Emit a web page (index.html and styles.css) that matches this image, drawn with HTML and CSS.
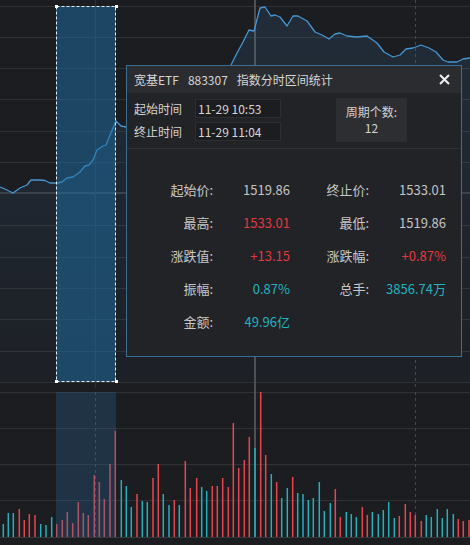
FILE: index.html
```html
<!DOCTYPE html>
<html lang="zh">
<head>
<meta charset="utf-8">
<title>指数分时区间统计</title>
<link rel="stylesheet" href="styles.css">
</head>
<body>
<div class="screen">
  <svg class="price-panel" width="470" height="388" viewBox="0 0 470 388">
    <defs>
      <linearGradient id="area" x1="0" y1="0" x2="0" y2="1">
        <stop offset="0" stop-color="#3d7fb8" stop-opacity="0.16"/>
        <stop offset="1" stop-color="#3d7fb8" stop-opacity="0.03"/>
      </linearGradient>
    </defs>
    <g class="grid">
      <path d="M0 6.5H470M0 37.5H470M0 68.5H470M0 99.5H470M0 131.5H470M0 162.5H470M0 225.5H470M0 257.5H470M0 288.5H470M0 319.5H470M0 351.5H470M0 382.5H470"/>
      <path class="mid" d="M0 193H470"/>
      <path d="M95.5 0V388"/>
      <path class="axis" d="M255 0V388"/>
      <path class="dash" d="M415.5 0V388"/>
    </g>
    <path class="area" d="M0 187 L5 189 L13 193 L20 188 L27 185 L31 180 L40 180 L45 180.5 L50 183 L58 183 L62 182 L67 178 L73 177 L80 172 L85 166 L89 165 L93 160 L97 150 L103 146 L106 145 L110 135 L116 121 L121 126 L126 127 L150 124 L180 110 L205 92 L225 75 L231 65 L237 53 L243 42 L249 30 L254 31 L260 8 L265 7 L271 16 L275 15 L280 17 L287 26 L293 16 L298 16 L307 21 L315 32 L322 35 L329 39 L335 34 L340 33 L347 36 L357 37 L367 36 L377 43 L384 52 L393 57 L400 55 L406 49 L413 48 L421 45 L429 48 L436 52 L443 60 L448 62 L457 62 L463 59 L470 58 L470 382 L0 382 Z"/>
    <path class="price" d="M0 187 L5 189 L13 193 L20 188 L27 185 L31 180 L40 180 L45 180.5 L50 183 L58 183 L62 182 L67 178 L73 177 L80 172 L85 166 L89 165 L93 160 L97 150 L103 146 L106 145 L110 135 L116 121 L121 126 L126 127 L150 124 L180 110 L205 92 L225 75 L231 65 L237 53 L243 42 L249 30 L254 31 L260 8 L265 7 L271 16 L275 15 L280 17 L287 26 L293 16 L298 16 L307 21 L315 32 L322 35 L329 39 L335 34 L340 33 L347 36 L357 37 L367 36 L377 43 L384 52 L393 57 L400 55 L406 49 L413 48 L421 45 L429 48 L436 52 L443 60 L448 62 L457 62 L463 59 L470 58"/>
    <rect class="sel" x="56" y="6" width="60" height="376"/>
    <rect class="sel-border" x="56.5" y="6.5" width="59" height="375"/>
    <g class="handle">
      <rect x="55" y="5" width="3" height="3"/>
      <rect x="115" y="5" width="3" height="3"/>
      <rect x="55" y="380" width="3" height="3"/>
      <rect x="115" y="380" width="3" height="3"/>
    </g>
  </svg>
  <svg class="vol-panel" width="470" height="157" viewBox="0 388 470 157">
    <g class="grid">
      <path d="M0 392.5H470M0 428.5H470M0 464.5H470M0 500.5H470"/>
      <path class="base" d="M0 537.5H470"/>
      <path class="dash" d="M95.5 392V537M415.5 392V537"/>
      <path class="axis" d="M255 388V537"/>
    </g>
    <path class="bar-up" d="M19.3 537V509M24.3 537V520M29.3 537V514M35 537V515M56.7 537V524M62.3 537V520M67.3 537V512M72.7 537V523M78.3 537V502M83.3 537V513M88.3 537V515M94.3 537V475M99.3 537V482M104.3 537V499M110 537V464M115.3 537V431M137 537V494M153 537V478M158.3 537V464M174.3 537V500M185.3 537V461M190.3 537V488M196.7 537V478M212.3 537V486M217.3 537V486M222.7 537V478M228.3 537V487M233.3 537V423M238.7 537V468M244.3 537V460M249.3 537V437M260.7 537V392M265.7 537V455M276.7 537V482M292.7 537V477M335.3 537V489M340.3 537V517M362.3 537V507M367.3 537V515M399.3 537V516M405.3 537V504M410.3 537V512M415.3 537V515M421.3 537V521M458.3 537V519M463.3 537V521M469 537V520"/>
    <path class="bar-down" d="M3.3 537V524M8.3 537V513M13.3 537V513M40.7 537V524M46 537V525M51.7 537V517M121.3 537V480M126.3 537V486M131.3 537V507M142.3 537V501M147.3 537V502M163.3 537V494M169 537V505M179.3 537V505M201.7 537V487M206.7 537V491M255 537V448M271.3 537V474M281.7 537V498M287.3 537V488M297.7 537V493M303 537V494M308.3 537V500M313.3 537V498M319.3 537V482M324.3 537V511M330.3 537V503M346.3 537V512M351.3 537V514M356.3 537V517M372.3 537V512M378.3 537V514M383.3 537V510M388.7 537V502M394.3 537V518M426.3 537V515M431.3 537V517M437.3 537V509M442.3 537V518M447.3 537V509M453.3 537V514"/>
    <rect class="sel-vol" x="56" y="392" width="60" height="145"/>
  </svg>

  <div class="dialog">
    <div class="title">
      <span class="t-seg">宽基ETF</span>
      <span class="t-seg">883307</span>
      <span class="t-seg">指数分时区间统计</span>
      <svg class="close" width="11" height="11" viewBox="0 0 11 11"><path d="M1 1L10 10M10 1L1 10"/></svg>
    </div>
    <div class="range">
      <div class="times">
        <div class="time-row"><span class="time-label">起始时间</span><span class="time-box">11-29 10:53</span></div>
        <div class="time-row"><span class="time-label">终止时间</span><span class="time-box">11-29 11:04</span></div>
      </div>
      <div class="period">
        <span>周期个数:</span>
        <span>12</span>
      </div>
    </div>
    <div class="stats">
      <span class="lbl">起始价:</span><span class="val">1519.86</span>
      <span class="lbl">终止价:</span><span class="val">1533.01</span>
      <span class="lbl">最高:</span><span class="val up">1533.01</span>
      <span class="lbl">最低:</span><span class="val">1519.86</span>
      <span class="lbl">涨跌值:</span><span class="val up">+13.15</span>
      <span class="lbl">涨跌幅:</span><span class="val up">+0.87%</span>
      <span class="lbl">振幅:</span><span class="val cy">0.87%</span>
      <span class="lbl">总手:</span><span class="val cy">3856.74万</span>
      <span class="lbl">金额:</span><span class="val cy">49.96亿</span>
    </div>
  </div>
</div>
</body>
</html>
```
FILE: styles.css
```css
html, body {
  margin: 0;
  padding: 0;
  background: #1c1d21;
}

.screen {
  position: relative;
  width: 470px;
  height: 545px;
  overflow: hidden;
  background: #1c1d21;
  font-family: "Noto Sans CJK SC", "Noto Sans", sans-serif;
}

.price-panel,
.vol-panel {
  display: block;
}

.grid path {
  fill: none;
  stroke: #2f3135;
  stroke-width: 1;
}

.grid .mid {
  stroke: #393b3f;
  stroke-width: 2;
}

.grid .axis {
  stroke: #4e5054;
  stroke-width: 2;
}

.grid .dash {
  stroke: #45474b;
  stroke-dasharray: 3 3;
}

.grid .base {
  stroke: #36383c;
}

.area {
  fill: url(#area);
  stroke: none;
}

.price {
  fill: none;
  stroke: #4596d2;
  stroke-width: 1.3;
  stroke-linejoin: round;
}

.sel {
  fill: rgba(30, 112, 168, 0.5);
}

.sel-border {
  fill: none;
  stroke: #e6eef5;
  stroke-width: 1;
  stroke-dasharray: 3 2;
}

.handle rect {
  fill: #ffffff;
}

.bar-up {
  fill: none;
  stroke: #e3474d;
  stroke-width: 1.5;
}

.bar-down {
  fill: none;
  stroke: #23b0ba;
  stroke-width: 1.5;
}

.sel-vol {
  fill: rgba(40, 110, 165, 0.28);
}

.dialog {
  position: absolute;
  left: 126px;
  top: 65px;
  width: 334px;
  height: 290px;
  border: 1px solid #3b6e95;
  background: #222327;
  color: #d2d2d2;
}

.title {
  height: 27px;
  display: flex;
  align-items: center;
  padding: 0 11px 0 7px;
  background: #2b2c30;
  font-size: 12px;
  color: #d6d6d6;
}

.t-seg {
  margin-right: 9px;
}

.close {
  margin-left: auto;
}

.close path {
  stroke: #f0f0f0;
  stroke-width: 2;
  fill: none;
}

.range {
  display: flex;
  align-items: center;
  padding: 5px 0 6px 7px;
  border-bottom: 1px solid #303135;
}

.times {
  display: flex;
  flex-direction: column;
  gap: 4px;
}

.time-row {
  display: flex;
  align-items: center;
  height: 19px;
}

.time-label {
  width: 61px;
  font-size: 12px;
  color: #d2d2d2;
}

.time-box {
  box-sizing: border-box;
  width: 86px;
  height: 19px;
  padding-left: 2px;
  border: 1px solid #2d2e32;
  background: #1c1d20;
  font-size: 12px;
  line-height: 17px;
  color: #d6d6d6;
}

.period {
  margin-left: 55px;
  width: 71px;
  height: 44px;
  display: flex;
  flex-direction: column;
  align-items: center;
  justify-content: center;
  background: #2d2e32;
  font-size: 12px;
  line-height: 16px;
  color: #d2d2d2;
}

.stats {
  display: grid;
  grid-template-columns: 86px 77px 79px 77px;
  grid-auto-rows: 33px;
  align-items: center;
  padding-top: 24px;
  font-size: 13px;
}

.lbl {
  text-align: right;
  color: #c8c8c8;
}

.val {
  text-align: right;
  color: #c4c4c4;
}

.val.up {
  color: #e2393f;
}

.val.cy {
  color: #23b3c0;
}
```
